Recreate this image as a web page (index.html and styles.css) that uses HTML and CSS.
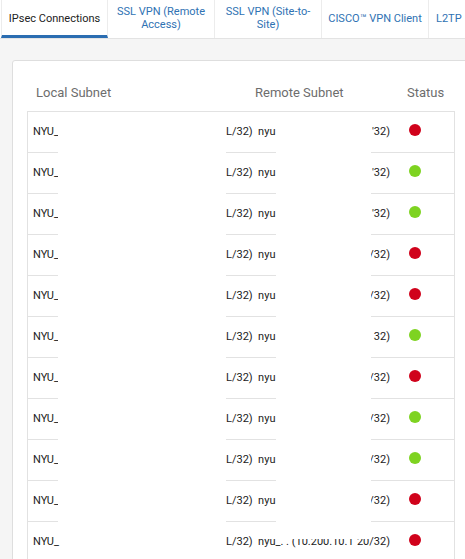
FILE: index.html
```html
<!DOCTYPE html>
<html>
<head>
<meta charset="utf-8">
<link rel="stylesheet" href="styles.css">
</head>
<body>
<div class="tabs">
  <div class="tab active">IPsec Connections</div>
  <div class="tab">SSL VPN (Remote<br>Access)</div>
  <div class="tab">SSL VPN (Site-to-<br>Site)</div>
  <div class="tab">CISCO™ VPN Client</div>
  <div class="tab last">L2TP</div>
</div>
<div class="main">
  <div class="card">
    <div class="head">
      <span class="h-local">Local Subnet</span>
      <span class="h-remote">Remote Subnet</span>
      <span class="h-status">Status</span>
    </div>
    <div class="table">
      <div class="row"><span class="c1">NYU_</span><span class="c2">L/32)&nbsp; nyu</span><span class="c3">'32)</span><span class="dot red"></span></div>
      <div class="row"><span class="c1">NYU_</span><span class="c2">L/32)&nbsp; nyu</span><span class="c3">'32)</span><span class="dot green"></span></div>
      <div class="row"><span class="c1">NYU_</span><span class="c2">L/32)&nbsp; nyu</span><span class="c3">'32)</span><span class="dot green"></span></div>
      <div class="row"><span class="c1">NYU_</span><span class="c2">L/32)&nbsp; nyu</span><span class="c3">/32)</span><span class="dot red"></span></div>
      <div class="row"><span class="c1">NYU_</span><span class="c2">L/32)&nbsp; nyu</span><span class="c3">)/32)</span><span class="dot red"></span></div>
      <div class="row"><span class="c1">NYU_</span><span class="c2">L/32)&nbsp; nyu</span><span class="c3">32)</span><span class="dot green"></span></div>
      <div class="row"><span class="c1">NYU_</span><span class="c2">L/32)&nbsp; nyu</span><span class="c3">l/32)</span><span class="dot red"></span></div>
      <div class="row"><span class="c1">NYU_</span><span class="c2">L/32)&nbsp; nyu</span><span class="c3">'/32)</span><span class="dot green"></span></div>
      <div class="row"><span class="c1">NYU_</span><span class="c2">L/32)&nbsp; nyu</span><span class="c3">5/32)</span><span class="dot green"></span></div>
      <div class="row"><span class="c1">NYU_</span><span class="c2">L/32)&nbsp; nyu</span><span class="c3">0/32)</span><span class="dot red"></span></div>
      <div class="row"><span class="c1">NYU_</span><span class="c23"><span>L/32)&nbsp; nyu_. . (10.200.10.1</span><span>20/32)</span></span><span class="dot red"></span></div>
    </div>
    <div class="redact r1"></div>
    <div class="redact r2"></div>
  </div>
</div>
</body>
</html>
```

FILE: styles.css
```css
html, body {
  margin: 0;
  padding: 0;
  overflow: hidden;
}
body {
  width: 465px;
  height: 559px;
  background: #f5f5f5;
  font-family: Roboto, "Liberation Sans", sans-serif;
}
.tabs {
  display: flex;
  height: 39px;
  background: #fff;
  border-bottom: 1px solid #e3e3e3;
  box-sizing: border-box;
  padding-left: 1px;
}
.tab {
  width: 107px;
  flex: none;
  display: flex;
  align-items: center;
  justify-content: center;
  text-align: center;
  font-size: 11px;
  line-height: 13px;
  color: #2f72b3;
  border-right: 1px solid #ececec;
  box-sizing: border-box;
  padding-bottom: 2px;
}
.tab.active {
  color: #222;
  border-left: 1px solid #ececec;
  border-bottom: 3px solid #2b6db1;
  padding-bottom: 0;
  padding-top: 1px;
}
.tab.last {
  justify-content: flex-start;
  padding-left: 7px;
  border-right: none;
}
.main {
  padding: 21px 0 0 12px;
}
.card {
  position: relative;
  width: 480px;
  height: 520px;
  background: #fff;
  border: 1px solid #dedede;
  border-radius: 3px;
  box-sizing: border-box;
  padding: 0 0 0 14px;
}
.head {
  position: relative;
  height: 50px;
  font-size: 13px;
  color: #6d6d6d;
}
.head span {
  position: absolute;
  top: 24px;
  line-height: 16px;
}
.h-local { left: 9px; }
.h-remote { left: 228px; }
.h-status { left: 380px; }
.table {
  width: 428px;
  border: 1px solid #e2e2e2;
  border-bottom: none;
  box-sizing: border-box;
}
.row {
  display: flex;
  align-items: center;
  height: 41px;
  border-bottom: 1px solid #e2e2e2;
  box-sizing: border-box;
  padding-left: 5px;
  padding-bottom: 1px;
  font-size: 11px;
  font-weight: 400;
  color: #222;
  white-space: nowrap;
}
.c1 { width: 193px; flex: none; }
.c2 { width: 126px; flex: none; }
.c3 { width: 38px; flex: none; text-align: right; }
.c23 {
  width: 164px;
  flex: none;
  display: flex;
  justify-content: space-between;
}
.dot {
  width: 12px;
  height: 12px;
  border-radius: 50%;
  margin-left: 19px;
  margin-top: -4px;
  flex: none;
}
.dot.red { background: #d0021b; }
.dot.green { background: #7ed321; }
.redact {
  position: absolute;
  top: 52px;
  height: 426px;
  background: #fff;
}
.r1 { left: 45px; width: 168px; }
.r2 { left: 263px; width: 95px; }
```
